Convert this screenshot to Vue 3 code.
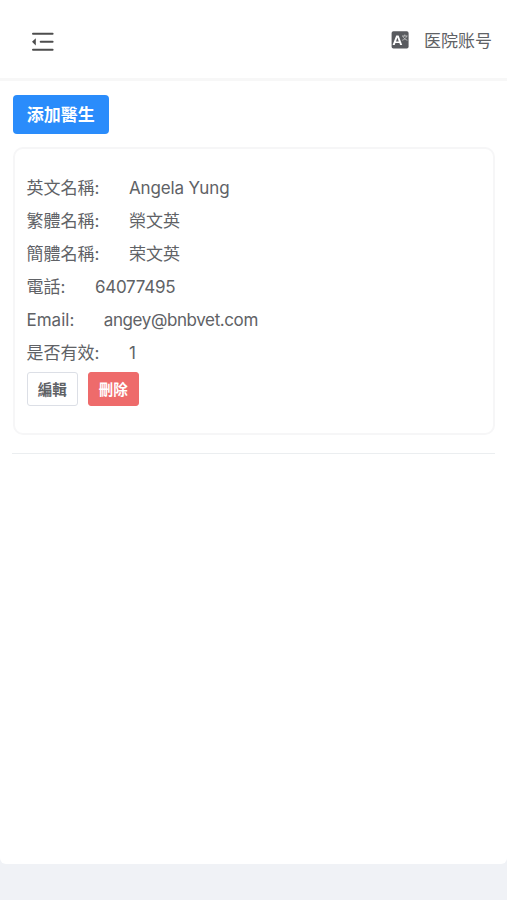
<script setup>
const fields = [
  { label: '英文名稱:', value: 'Angela Yung', kind: 'name' },
  { label: '繁體名稱:', value: '榮文英' },
  { label: '簡體名稱:', value: '荣文英' },
  { label: '電話:', value: '64077495', kind: 'phone' },
  { label: 'Email:', value: 'angey@bnbvet.com', kind: 'email' },
  { label: '是否有效:', value: '1' },
]
</script>

<template>
  <div class="page">
    <div class="panel">
      <header class="header">
        <svg class="fold" viewBox="0 0 24 22" width="24" height="22">
          <g stroke="#4d4d4d" stroke-width="2" stroke-linecap="round">
            <path d="M2 2.7H21.6M9.7 10.8H21.6M2 18.8H21.6" />
          </g>
          <path d="M1 10.8L4.8 7.2V14.4Z" fill="#4d4d4d" />
        </svg>
        <div class="account">
          <svg class="lang" viewBox="0 0 18 18" width="18" height="18">
            <rect x="0.6" y="0.3" width="17" height="17.2" rx="1.8" fill="#595b5f" />
            <path d="M1.6 14L5.2 4.6H7.6L11.2 14H9.1L8.4 12H4.4L3.7 14ZM5 10.4H7.8L6.4 6.5Z" fill="#fff" fill-rule="evenodd" />
            <path d="M11 5H16.6M13.8 3.5V5M12 5.2C12.5 7.1 14.2 8.5 16.4 9.3M15.6 5.2C15.1 7.1 13.4 8.5 11.2 9.3" fill="none" stroke="#ccc" stroke-width="0.8" />
          </svg>
          <span>医院账号</span>
        </div>
      </header>
      <main class="content">
        <button class="btn primary">添加醫生</button>
        <section class="card">
          <div v-for="f in fields" :key="f.label" class="row">
            <span class="label">{{ f.label }}</span>
            <span :class="f.kind">{{ f.value }}</span>
          </div>
          <div class="actions">
            <button class="btn small">編輯</button>
            <button class="btn small danger">刪除</button>
          </div>
        </section>
        <div class="divider"></div>
      </main>
    </div>
  </div>
</template>

<style>
body {
  background: #f0f2f6;
}
</style>

<style scoped>
.page {
  height: 900px;
  overflow: hidden;
  background: #f0f2f6;
  color: #606266;
  font-family: Inter, "Noto Sans CJK TC", sans-serif;
  font-size: 17px;
}
.panel {
  height: 864px;
  background: #fff;
  border-radius: 0 0 6px 6px;
}
.header {
  box-sizing: border-box;
  height: 81px;
  border-bottom: 3px solid #f7f7f7;
  padding: 1px 15px 0 31px;
  display: flex;
  align-items: center;
  justify-content: space-between;
}
.fold {
  margin-top: 4px;
}
.account {
  display: flex;
  align-items: center;
  gap: 15px;
  font-family: "Noto Sans CJK SC", sans-serif;
  line-height: 24px;
}
.content {
  padding: 14px 12px 0 13px;
}
.btn {
  display: block;
  box-sizing: border-box;
  margin: 0;
  padding: 0 0 2px;
  font-family: "Noto Sans CJK TC", sans-serif;
  font-weight: 700;
  border-radius: 4px;
  border: 1px solid #dcdfe6;
  background: #fff;
  color: #606266;
}
.primary {
  width: 95.5px;
  height: 39px;
  border: 0;
  background: #2a8cfb;
  color: #fff;
  font-size: 17px;
}
.card {
  box-sizing: border-box;
  margin-top: 12.5px;
  height: 288px;
  border: 2px solid #f6f6f7;
  border-radius: 10px;
  padding: 23.5px 11.5px 0;
}
.row {
  display: flex;
  height: 33px;
  line-height: 33px;
  gap: 29.5px;
  white-space: nowrap;
}
.name {
  letter-spacing: -0.12px;
}
.phone {
  letter-spacing: -0.25px;
}
.email {
  letter-spacing: -0.4px;
}
.actions {
  display: flex;
  gap: 9.5px;
  margin-top: 2px;
}
.small {
  width: 51.5px;
  height: 34px;
  font-size: 14.5px;
  border-radius: 3px;
}
.danger {
  border-color: #ee6b6b;
  background: #ee6b6b;
  color: #fff;
}
.divider {
  margin: 18.5px 0 0 -1px;
  height: 1px;
  background: #ebeef0;
}
</style>
